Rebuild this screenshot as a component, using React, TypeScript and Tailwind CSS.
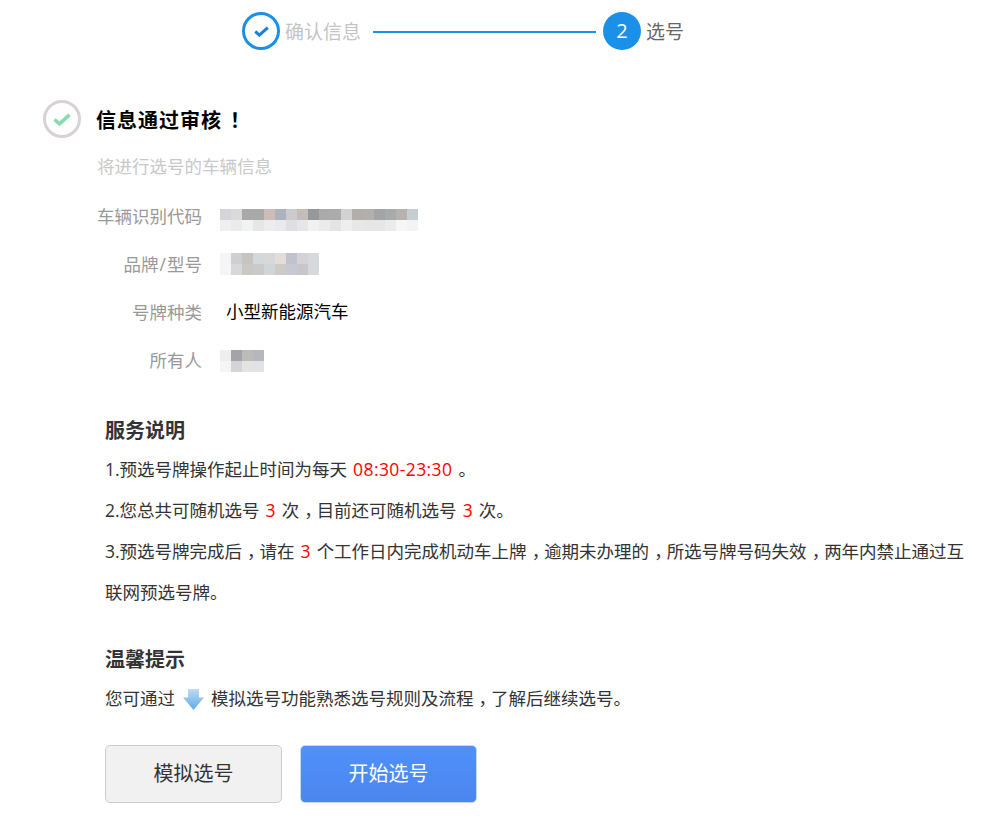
const vinColors = [
  '#d5d4d8', '#dadada', '#a9a9a9', '#a8a9a8', '#cdbdb9', '#acb3bd', '#cbcbce', '#c3bdba', '#96979a', '#aaaaaa', '#ababab', '#d2d2d2', '#b3adac', '#b2b0ae', '#a3a4a5', '#a9aaac', '#b5b2b0', '#c6cccf',
  '#f0eff0', '#ecebeb', '#f1f3f3', '#e5e7e7', '#eeecec', '#e8e9ed', '#e0dee0', '#e5e6e9', '#f1f1f1', '#ebebec', '#e4e4e4', '#efeeef', '#e7e7e8', '#e6e6e6', '#e6e6e6', '#ebebeb', '#f6f6f6', '#f2f3f3',
]
const modelColors = [
  '#f5f5f5', '#cfcfd3', '#c6c4c1', '#d3d8dc', '#d8d8d8', '#e3dcd8', '#c0c2cc', '#d5d2d6', '#d6d9db',
  '#f5f5f5', '#d7d8d8', '#c9c8c4', '#c8cbc9', '#d2d5d6', '#cfcac6', '#c6c8d2', '#c9c6c8', '#d6d9dc',
]
const ownerColors = [
  '#efeeee', '#a3a3a8', '#bbbbb9', '#b4b8bd',
  '#f5f5f5', '#d4d3d6', '#e3e3e1', '#e1e1e7',
]

function Mosaic({ colors, columns, className }: { colors: string[]; columns: number; className: string }) {
  return (
    <div className={`flex flex-wrap ${className}`} style={{ width: columns * 11 }}>
      {colors.map((color, i) => (
        <div key={i} className="w-[11px] h-[11px]" style={{ backgroundColor: color }} />
      ))}
    </div>
  )
}

function InfoRow({ label, children }: { label: React.ReactNode; children: React.ReactNode }) {
  return (
    <div className="flex items-center h-[48px]">
      <div className="w-[105px] text-right text-[#999] pt-[2px]">{label}</div>
      <div className="ml-[18px]">{children}</div>
    </div>
  )
}

function Red({ children }: { children: React.ReactNode }) {
  return <span className="text-[#f00] mx-[6px]">{children}</span>
}

// the comma sits in the middle of its box in the original font
function Comma() {
  return <span className="pl-[5px] pr-[3.75px] [font-feature-settings:'halt']">，</span>
}

function CheckMark({ color, className }: { color: string; className: string }) {
  return (
    <svg viewBox="0 0 18 13" className={className}>
      <path d="M1.5 6.5 6.5 10.8 16.5 1.8" fill="none" stroke={color} strokeWidth="3.6" />
    </svg>
  )
}

export default function App() {
  return (
    <div className="w-[981px] h-[825px] bg-white overflow-hidden text-[17.5px] text-[#333] font-['Open_Sans','Noto_Sans_CJK_SC',sans-serif]">
      {/* steps */}
      <div className="flex items-center pl-[242px] pt-[12px] h-[50px] text-[19px]">
        <div className="w-[38px] h-[38px] rounded-full border-[3px] border-[#1a90e8] flex items-center justify-center">
          <CheckMark color="#1a7fd6" className="w-[15px] h-[11px]" />
        </div>
        <span className="ml-[5px] pt-[2px] text-[#c4c4c4]">确认信息</span>
        <div className="ml-[12px] w-[223px] h-[2px] bg-[#1a90e8] mt-[1px]" />
        <div className="ml-[7px] w-[38px] h-[38px] rounded-full bg-[#1a90e8] text-white text-[20px] flex items-center justify-center">2</div>
        <span className="ml-[5px] pt-[2px] text-[#666]">选号</span>
      </div>

      {/* result */}
      <div className="flex items-center pl-[43px] mt-[50px]">
        <div className="w-[38px] h-[38px] rounded-full border-[3px] border-[#d9d2d2] flex items-center justify-center">
          <CheckMark color="#86dbb0" className="w-[18px] h-[13px] mt-[1px]" />
        </div>
        <h2 className="ml-[15px] pt-[3px] text-[20px] font-bold text-black tracking-[1px]">
          信息通过审核<span className="ml-[8px]">！</span>
        </h2>
      </div>
      <p className="pl-[97px] mt-[15px] leading-[26px] text-[#c8c8c8]">将进行选号的车辆信息</p>

      <div className="pl-[97px] mt-[12px]">
        <InfoRow label="车辆识别代码">
          <Mosaic colors={vinColors} columns={18} className="mt-[10px]" />
        </InfoRow>
        <InfoRow label={<>品牌<span className="mx-[1px]">/</span>型号</>}>
          <Mosaic colors={modelColors} columns={9} className="mt-[2px]" />
        </InfoRow>
        <InfoRow label="号牌种类">
          <span className="ml-[6px] text-black">小型新能源汽车</span>
        </InfoRow>
        <InfoRow label="所有人">
          <Mosaic colors={ownerColors} columns={4} className="mt-[4px]" />
        </InfoRow>
      </div>

      {/* service notes */}
      <div className="pl-[105px] mt-[33px] w-[970px]">
        <h3 className="text-[20px] font-bold leading-[30px]">服务说明</h3>
        <div className="mt-[3px] leading-[41px]">
          <p>1.预选号牌操作起止时间为每天<Red><span className="tracking-[0.4px]">08:30-23:30</span></Red>。</p>
          <p>2.您总共可随机选号<Red>3</Red>次<Comma />目前还可随机选号<Red>3</Red>次。</p>
          <p>
            3.预选号牌完成后<Comma />请在<Red>3</Red>个工作日内完成机动车上牌<Comma />逾期未办理的<Comma />所选号牌号码失效<Comma />两年内禁止通过互
            <br />
            联网预选号牌。
          </p>
        </div>

        <h3 className="mt-[32px] text-[20px] font-bold leading-[30px]">温馨提示</h3>
        <p className="mt-[3px] leading-[41px] flex items-center">
          <span>您可通过</span>
          <svg viewBox="0 0 20 20" className="w-[21px] h-[21px] mx-[7.5px] mt-[2px]">
            <defs>
              <linearGradient id="arrowFill" x1="0" y1="0" x2="0" y2="1">
                <stop offset="0" stopColor="#bcdcf5" />
                <stop offset="1" stopColor="#5fa9e6" />
              </linearGradient>
            </defs>
            <path d="M4.8 0h10.4v8H20L10 20 0 8h4.8z" fill="url(#arrowFill)" />
          </svg>
          <span>模拟选号功能熟悉选号规则及流程<Comma />了解后继续选号。</span>
        </p>

        <div className="flex gap-[18px] mt-[26px]">
          <button className="w-[177px] h-[58px] rounded-[5px] border border-[#ccc] bg-[#f1f1f1] text-[20px] text-[#333]">模拟选号</button>
          <button className="w-[177px] h-[58px] rounded-[5px] border border-[#c5d6ee] bg-gradient-to-b from-[#5090fb] to-[#4a86ee] text-[20px] text-white">开始选号</button>
        </div>
      </div>
    </div>
  )
}
